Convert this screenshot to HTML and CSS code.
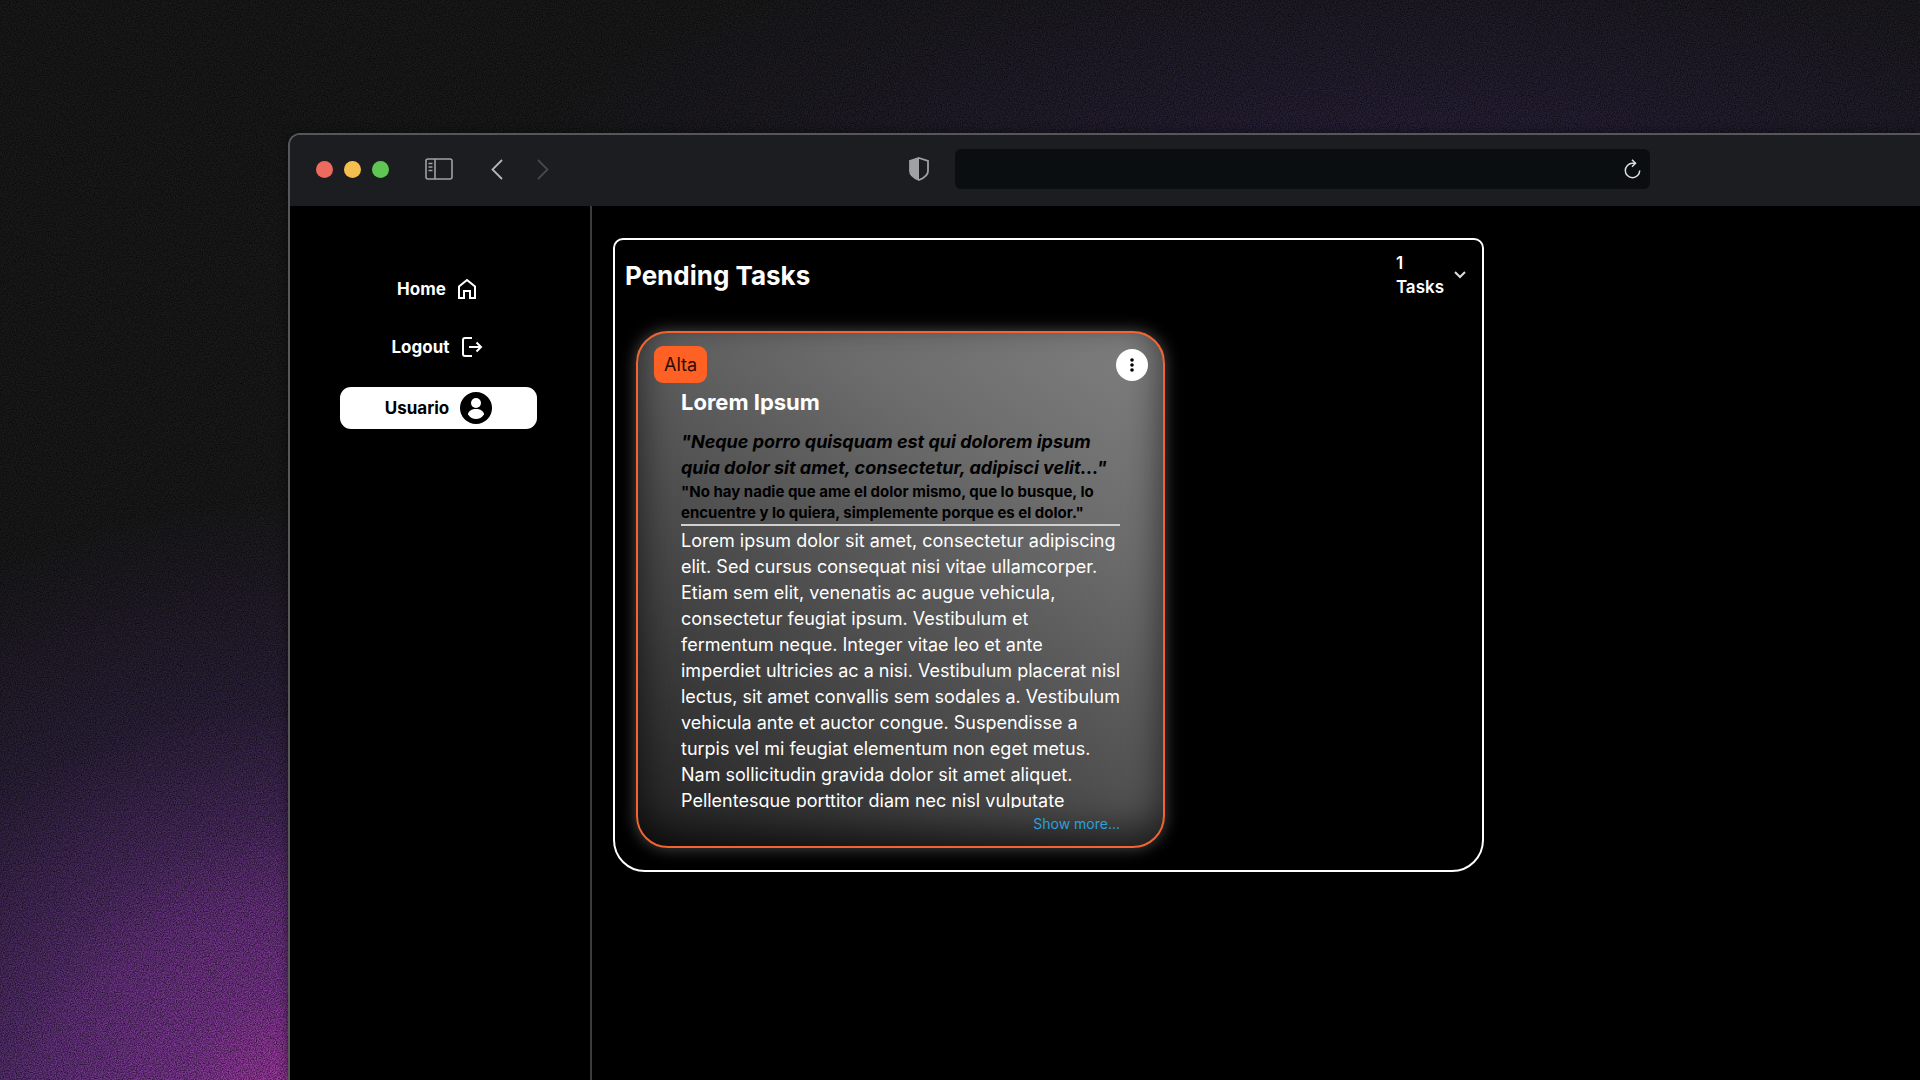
FILE: index.html
```
<!DOCTYPE html>
<html lang="en">
<head>
    <meta charset="UTF-8">
    <meta name="viewport" content="width=device-width, initial-scale=1.0">
    <link rel="stylesheet" href="styles.css">
    <title>Pending Tasks</title>
</head>
<body>

    <svg class="grain" aria-hidden="true">
        <filter id="noise">
            <feTurbulence type="fractalNoise" baseFrequency="0.85" numOctaves="2" stitchTiles="stitch"/>
            <feColorMatrix type="matrix" values="0 0 0 0 0  0 0 0 0 0  0 0 0 0 0  1.2 0 0 0 -0.35"/>
        </filter>
        <rect width="100%" height="100%" filter="url(#noise)"/>
    </svg>

    <div class="window">
        <div class="toolbar">
            <div class="lights">
                <span class="light red"></span>
                <span class="light yellow"></span>
                <span class="light green"></span>
            </div>
            <button type="button" class="tool" aria-label="Sidebar">
                <svg width="28" height="22" viewBox="0 0 28 22" fill="none" stroke="#a0a2a5" stroke-width="1.6">
                    <rect x="1" y="1" width="26" height="20" rx="2"/>
                    <path d="M10 1v20M3.5 5.5h4M3.5 9h4M3.5 12.5h4"/>
                </svg>
            </button>
            <div class="history">
                <button type="button" class="tool" aria-label="Back">
                    <svg width="12" height="21" viewBox="0 0 12 21" fill="none" stroke="#b4b6b8" stroke-width="1.8"><path d="M11 1 1.5 10.5 11 20"/></svg>
                </button>
                <button type="button" class="tool" aria-label="Forward">
                    <svg width="12" height="21" viewBox="0 0 12 21" fill="none" stroke="#46484b" stroke-width="1.8"><path d="M1 1l9.5 9.5L1 20"/></svg>
                </button>
            </div>
            <svg class="shield" width="20" height="24" viewBox="0 0 20 24">
                <path d="M10 1 19 4v10c0 4-4 7-9 9-5-2-9-5-9-9V4z" fill="none" stroke="#9fa1a4" stroke-width="1.8"/>
                <path d="M10 1v22c-5-2-9-5-9-9V4z" fill="#9fa1a4"/>
            </svg>
            <div class="address">
                <input type="text" class="address-input" aria-label="Address">
                <button type="button" class="tool" aria-label="Reload">
                    <svg width="17" height="20" viewBox="0 0 17 20" fill="none" stroke="#dcdddf" stroke-width="1.5">
                        <path d="M15.7 11.5a7.2 7.2 0 1 1-7.2-7.2h3"/>
                        <path d="M8 .8l3.5 3.5L8 7.8"/>
                    </svg>
                </button>
            </div>
        </div>

        <div class="app">
            <nav class="sidebar">
                <a href="#" class="nav-link">Home
                    <svg width="20" height="22" viewBox="0 0 20 22" fill="none" stroke="#fff" stroke-width="2">
                        <path d="M2 8.5 10 2l8 6.5V20h-5v-7H7v7H2z"/>
                    </svg>
                </a>
                <a href="#" class="nav-link">Logout
                    <svg width="22" height="22" viewBox="0 0 22 22" fill="none" stroke="#fff" stroke-width="2">
                        <path d="M11 2H4a2 2 0 0 0-2 2v14a2 2 0 0 0 2 2h7M8 11h12M15.5 6.5 20 11l-4.500 4.500"/>
                    </svg>
                </a>
                <button type="button" class="user">Usuario
                    <svg width="32" height="32" viewBox="0 0 32 32">
                        <circle cx="16" cy="16" r="16" fill="#000"/>
                        <circle cx="16" cy="11" r="5" fill="#fff"/>
                        <path d="M8 22.5c0-3.5 4-5.5 8-5.5s8 2 8 5.500c-2 3-5 4.500-8 4.500s-6-1.500-8-4.500z" fill="#fff"/>
                    </svg>
                </button>
            </nav>

            <main class="content">
                <section class="panel">
                    <header class="panel-header">
                        <h1>Pending Tasks</h1>
                        <button type="button" class="counter">
                            <span>1<br>Tasks</span>
                            <svg width="12" height="8" viewBox="0 0 12 8" fill="none" stroke="#ddd" stroke-width="2"><path d="M1 1l5 5 5-5"/></svg>
                        </button>
                    </header>

                    <article class="card">
                        <div class="card-top">
                            <span class="priority">Alta</span>
                            <button type="button" class="menu" aria-label="Options">
                                <svg width="4" height="16" viewBox="0 0 4 16"><circle cx="2" cy="3" r="1.8"/><circle cx="2" cy="8" r="1.8"/><circle cx="2" cy="13" r="1.8"/></svg>
                            </button>
                        </div>
                        <h2>Lorem Ipsum</h2>
                        <div class="card-text">
                            <p class="quote">"Neque porro quisquam est qui dolorem ipsum<br>quia dolor sit amet, consectetur, adipisci velit..."</p>
                            <p class="translation">"No hay nadie que ame el dolor mismo, que lo busque, lo<br>encuentre y lo quiera, simplemente porque es el dolor."</p>
                            <hr>
                            <p class="body-text">Lorem ipsum dolor sit amet, consectetur adipiscing<br>
                                elit. Sed cursus consequat nisi vitae ullamcorper.<br>
                                Etiam sem elit, venenatis ac augue vehicula,<br>
                                consectetur feugiat ipsum. Vestibulum et<br>
                                fermentum neque. Integer vitae leo et ante<br>
                                imperdiet ultricies ac a nisi. Vestibulum placerat nisl<br>
                                lectus, sit amet convallis sem sodales a. Vestibulum<br>
                                vehicula ante et auctor congue. Suspendisse a<br>
                                turpis vel mi feugiat elementum non eget metus.<br>
                                Nam sollicitudin gravida dolor sit amet aliquet.<br>
                                Pellentesque porttitor diam nec nisl vulputate</p>
                        </div>
                        <a href="#" class="more">Show more...</a>
                    </article>
                </section>
            </main>
        </div>
    </div>

</body>
</html>
```
FILE: styles.css
```
* {
    box-sizing: border-box;
}

body {
    font-family: Inter, sans-serif;
    color: #fff;
    margin: 0;
    padding: 133px 0 0 288px;
    min-height: 100vh;
    display: flex;
    position: relative;
    overflow: hidden;
    background:
        radial-gradient(ellipse 300px 300px at 310px 1120px, #b83cb0 0%, rgba(150, 55, 160, 0.4) 45%, transparent 100%),
        radial-gradient(ellipse 720px 680px at 300px 1180px, #8a44ae 0%, rgba(112, 56, 145, 0.85) 40%, rgba(60, 40, 85, 0.6) 70%, transparent 100%),
        radial-gradient(ellipse 900px 260px at 1420px 170px, #2c2340 0%, transparent 100%),
        #1b1b1c;
}

h1, h2, p {
    margin: 0;
}

a {
    color: inherit;
    text-decoration: none;
}

button {
    font: inherit;
    color: inherit;
    padding: 0;
    border: none;
    background: none;
    cursor: pointer;
}

svg {
    display: block;
    flex-shrink: 0;
}

.grain {
    position: absolute;
    top: 0;
    left: 0;
    width: 100%;
    height: 100%;
}

/* Browser window */
.window {
    position: relative;
    flex: 1;
    display: flex;
    flex-direction: column;
    border: 2px solid #55575a;
    border-right: none;
    border-bottom: none;
    border-radius: 12px 0 0 0;
    background-color: #000;
    box-shadow: 0 0 10px rgba(0, 0, 0, 0.5);
    overflow: hidden;
}

.toolbar {
    display: flex;
    align-items: center;
    height: 71px;
    padding: 0 0 3px 26px;
    background-color: #1c1d20;
}

.lights {
    display: flex;
    gap: 11px;
    margin-right: 36px;
}

.light {
    width: 17px;
    height: 17px;
    border-radius: 50%;
}

.red { background-color: #ed6a5e; }
.yellow { background-color: #f5bf4f; }
.green { background-color: #61c554; }

.history {
    display: flex;
    gap: 34px;
    margin-left: 38px;
}

.shield {
    margin-left: 360px;
}

.address {
    display: flex;
    align-items: center;
    width: 695px;
    height: 40px;
    margin-left: 26px;
    padding-right: 9px;
    border-radius: 6px;
    background-color: #0b0e11;
}

.address-input {
    flex: 1;
    height: 100%;
    padding: 0 16px;
    border: none;
    background: none;
    color: #fff;
    font-size: 16px;
}

/* App */
.app {
    flex: 1;
    display: flex;
}

.sidebar {
    width: 302px;
    padding: 65px 53px 0 50px;
    border-right: 2px solid #3c3c3c;
    display: flex;
    flex-direction: column;
    align-items: center;
    gap: 22px;
    font-size: 17px;
    font-weight: 700;
}

.nav-link, .user {
    display: flex;
    align-items: center;
    justify-content: center;
    gap: 11px;
}

.nav-link {
    height: 36px;
    padding-right: 3px;
}

.user {
    width: 100%;
    height: 42px;
    border-radius: 11px;
    background-color: #fff;
    color: #000;
}

.content {
    flex: 1;
    padding: 32px 21px;
}

.panel {
    width: 871px;
    padding: 10px 16px 22px 10px;
    border: 2px solid #fff;
    border-radius: 10px 10px 32px 32px;
}

.panel-header {
    display: flex;
    align-items: center;
    justify-content: space-between;
    height: 50px;
}

h1 {
    font-size: 26px;
    font-weight: 700;
}

.counter {
    display: flex;
    align-items: center;
    gap: 10px;
    font-size: 17px;
    font-weight: 600;
    line-height: 24px;
    text-align: left;
}

.card {
    width: 529px;
    margin: 31px 0 0 11px;
    padding: 13px 15px 11px 16px;
    border: 2px solid #f26430;
    border-radius: 32px;
    background: linear-gradient(215deg, #808080 0%, #6c6c6c 28%, #404040 72%, #202020 100%);
    box-shadow: 0 0 16px rgba(255, 255, 255, 0.3), inset 0 -14px 36px rgba(0, 0, 0, 0.65);
}

.card-top {
    display: flex;
    align-items: center;
    justify-content: space-between;
    height: 37px;
}

.priority {
    padding: 0 10px;
    border-radius: 9px;
    background-color: #ff6124;
    color: #2a0c02;
    font-size: 18px;
    line-height: 37px;
}

.menu {
    display: flex;
    align-items: center;
    justify-content: center;
    width: 32px;
    height: 32px;
    border-radius: 50%;
    background-color: #fff;
}

h2 {
    margin: 3px 0 11px 27px;
    font-size: 22px;
    font-weight: 700;
    line-height: 32px;
}

.card-text {
    height: 379px;
    margin: 0 28px 0 27px;
    white-space: nowrap;
    overflow: hidden;
}

.quote {
    color: #000;
    font-size: 18px;
    font-weight: 700;
    font-style: italic;
    line-height: 26px;
}

.translation {
    color: #000;
    font-size: 15px;
    font-weight: 700;
    line-height: 21px;
}

hr {
    height: 2px;
    margin: 1px 0 2px;
    border: none;
    background-color: #d0d0d0;
}

.body-text {
    font-size: 18px;
    line-height: 26px;
}

.more {
    display: block;
    margin: 5px 28px 0 0;
    color: #2ba0dc;
    font-size: 14px;
    line-height: 22px;
    text-align: right;
}
```
